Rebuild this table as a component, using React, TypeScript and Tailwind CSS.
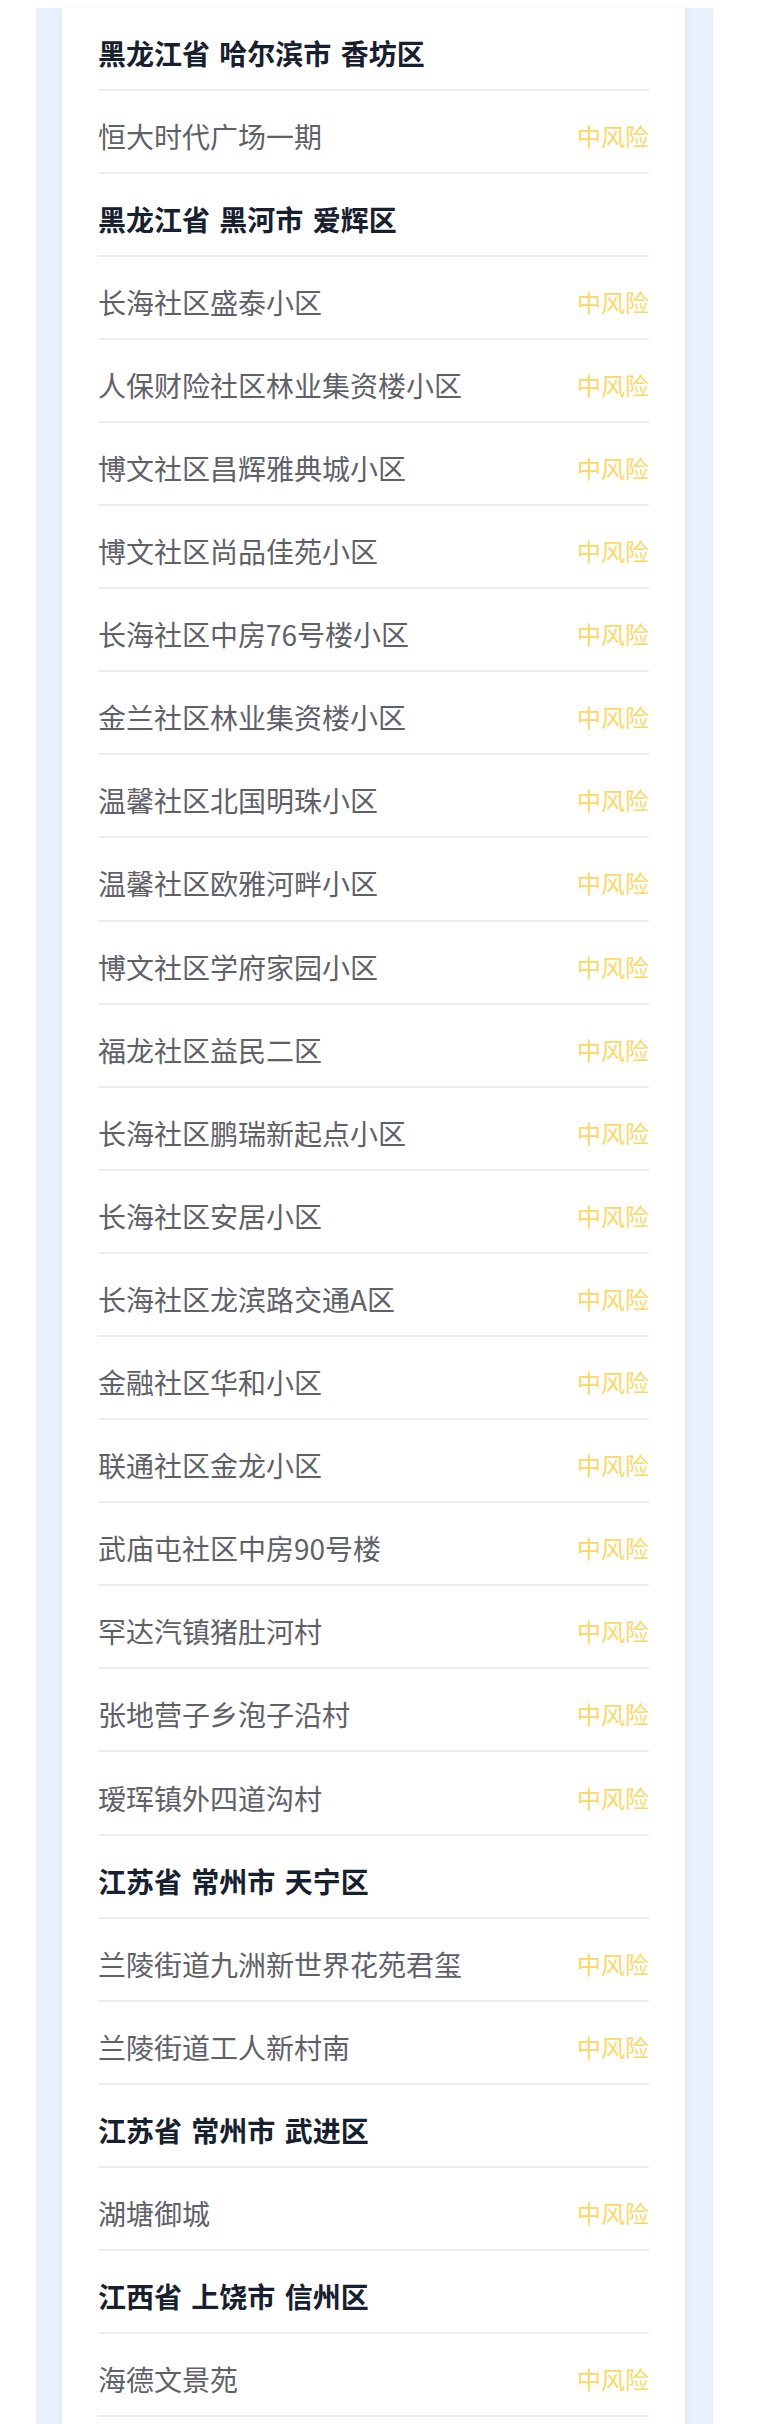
type Item = { kind: "area" | "place"; name: string };

const areas: { area: string; places: string[] }[] = [
  { area: "黑龙江省 哈尔滨市 香坊区", places: ["恒大时代广场一期"] },
  {
    area: "黑龙江省 黑河市 爱辉区",
    places: [
      "长海社区盛泰小区",
      "人保财险社区林业集资楼小区",
      "博文社区昌辉雅典城小区",
      "博文社区尚品佳苑小区",
      "长海社区中房76号楼小区",
      "金兰社区林业集资楼小区",
      "温馨社区北国明珠小区",
      "温馨社区欧雅河畔小区",
      "博文社区学府家园小区",
      "福龙社区益民二区",
      "长海社区鹏瑞新起点小区",
      "长海社区安居小区",
      "长海社区龙滨路交通A区",
      "金融社区华和小区",
      "联通社区金龙小区",
      "武庙屯社区中房90号楼",
      "罕达汽镇猪肚河村",
      "张地营子乡泡子沿村",
      "瑷珲镇外四道沟村",
    ],
  },
  { area: "江苏省 常州市 天宁区", places: ["兰陵街道九洲新世界花苑君玺", "兰陵街道工人新村南"] },
  { area: "江苏省 常州市 武进区", places: ["湖塘御城"] },
  { area: "江西省 上饶市 信州区", places: ["海德文景苑"] },
];

const items: Item[] = areas.flatMap((a) => [
  { kind: "area" as const, name: a.area },
  ...a.places.map((p) => ({ kind: "place" as const, name: p })),
]);

export default function App() {
  return (
    <div
      className="min-h-[2424px] bg-white pt-[12px] overflow-hidden"
      style={{ fontFamily: "'Noto Sans CJK SC', 'Noto Sans', sans-serif" }}
    >
      {/* blue panel */}
      <div className="ml-[36px] w-[677px] bg-[#e8f1fc] pl-[26px] pr-[28px]">
        {/* white card */}
        <div className="bg-white px-[36px] pb-[40px] shadow-[0_0_8px_rgba(60,120,200,0.08)]">
          <div className="-mt-[4.5px]">
            {items.map((it, i) =>
              it.kind === "area" ? (
                <div
                  key={i}
                  className="flex h-[83.1px] items-center border-b-2 border-[#ededed] pt-[9px]"
                >
                  <span className="text-[28px] font-bold leading-none text-[#17202e] [word-spacing:3px]">
                    {it.name}
                  </span>
                </div>
              ) : (
                <div
                  key={i}
                  className="flex h-[83.1px] items-center justify-between border-b-2 border-[#ededed] pt-[9px]"
                >
                  <span className="text-[28px] leading-none text-[#5f6169]">{it.name}</span>
                  <span className="text-[24px] leading-none text-[#fbd866]">中风险</span>
                </div>
              ),
            )}
          </div>
        </div>
      </div>
    </div>
  );
}
